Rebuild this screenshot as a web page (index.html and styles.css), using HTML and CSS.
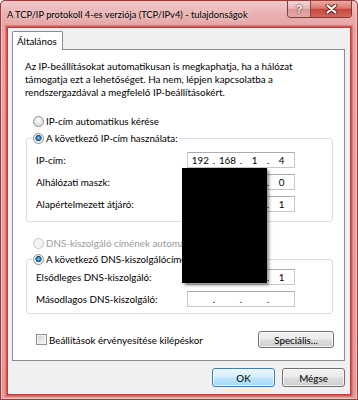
FILE: index.html
```html
<!DOCTYPE html>
<html lang="hu">
<head>
<meta charset="utf-8">
<title>TCP/IPv4 tulajdonságok</title>
<link rel="stylesheet" href="styles.css">
</head>
<body>
<div class="window">
  <div class="titlebar">
    <span class="title">A TCP/IP protokoll 4-es verziója (TCP/IPv4) - tulajdonságok</span>
    <div class="caption">
      <span class="cbtn help">?</span>
      <span class="cbtn close"><svg width="13" height="10" viewBox="0 0 13 10"><path d="M2.5 1.5 L10.5 8.5 M10.5 1.5 L2.5 8.5" stroke="#5a2020" stroke-width="4" stroke-linecap="round"/><path d="M2.5 1.5 L10.5 8.5 M10.5 1.5 L2.5 8.5" stroke="#ffffff" stroke-width="2.2" stroke-linecap="round"/></svg></span>
    </div>
  </div>
  <div class="client">
    <div class="tabs"><span class="tab">Általános</span></div>
    <div class="panel">
      <p class="intro">Az IP-beállításokat automatikusan is megkaphatja, ha a hálózat<br>támogatja ezt a lehetőséget. Ha nem, lépjen kapcsolatba a<br>rendszergazdával a megfelelő IP-beállításokért.</p>
      <div class="opt first"><span class="radio"></span><span>IP-cím automatikus kérése</span></div>
      <fieldset class="group">
        <legend><span class="opt inlegend"><span class="radio on"></span><span>A következő IP-cím használata:</span></span></legend>
        <div class="fields">
          <span>IP-cím:</span>
          <div class="ip"><span>192</span><i>.</i><span>168</span><i>.</i><span>1</span><i>.</i><span>4</span></div>
          <span>Alhálózati maszk:</span>
          <div class="ip"><span>255</span><i>.</i><span>255</span><i>.</i><span>255</span><i>.</i><span>0</span></div>
          <span>Alapértelmezett átjáró:</span>
          <div class="ip"><span>192</span><i>.</i><span>168</span><i>.</i><span>1</span><i>.</i><span>1</span></div>
        </div>
      </fieldset>
      <div class="opt dnsauto disabled"><span class="radio off"></span><span>DNS-kiszolgáló címének automatikus kérése</span></div>
      <fieldset class="group dns">
        <legend><span class="opt inlegend"><span class="radio on"></span><span>A következő DNS-kiszolgálócímek használata:</span></span></legend>
        <div class="fields dnsfields">
          <span>Elsődleges DNS-kiszolgáló:</span>
          <div class="ip"><span>192</span><i>.</i><span>168</span><i>.</i><span>1</span><i>.</i><span>1</span></div>
          <span>Másodlagos DNS-kiszolgáló:</span>
          <div class="ip"><span></span><i>.</i><span></span><i>.</i><span></span><i>.</i><span></span></div>
        </div>
      </fieldset>
      <div class="bottomrow">
        <span class="check"></span><span>Beállítások érvényesítése kilépéskor</span>
        <span class="btn special">Speciális...</span>
      </div>
    </div>
    <div class="buttons">
      <span class="btn default">OK</span>
      <span class="btn">Mégse</span>
    </div>
  </div>
  <div class="redact"></div>
</div>
</body>
</html>
```
FILE: styles.css
```css
* { box-sizing: border-box; }
html, body { margin: 0; padding: 0; }
body {
  width: 358px;
  height: 400px;
  overflow: hidden;
  background: #ffffff;
  font-family: "Lato", "Liberation Sans", sans-serif;
  font-size: 9.8px;
  color: #000;
}
.window {
  position: relative;
  width: 358px;
  height: 400px;
  display: flex;
  flex-direction: column;
  border-radius: 5px 5px 0 0;
  background: linear-gradient(180deg, #f2cdcd 0px, #e9b0b0 14px, #e6a5a5 27px, #e39c9c 100%);
  box-shadow: inset 0 0 0 1px #9c3c3c, inset 0 0 0 2px #f0c2c2;
}
.titlebar {
  height: 27px;
  display: flex;
  align-items: flex-start;
  padding-left: 7px;
}
.title {
  flex: 1;
  min-width: 0;
  overflow: hidden;
  margin-top: 8px;
  font-size: 9.3px;
  line-height: 14px;
  color: #000;
  white-space: nowrap;
  text-shadow: 0 0 6px rgba(255,255,255,0.9);
}
.caption {
  flex: none;
  margin-right: 6px;
  margin-top: 1px;
  display: flex;
  border: 1px solid #7c3d3d;
  border-top: none;
  border-radius: 0 0 4px 4px;
  overflow: hidden;
  height: 17px;
}
.cbtn {
  display: flex;
  align-items: center;
  justify-content: center;
  height: 16px;
}
.help {
  width: 23px;
  border-right: 1px solid #8a4848;
  background: linear-gradient(180deg, #f4d6d6 0%, #e9b6b6 48%, #dc9797 52%, #e4a8a8 100%);
  color: #fff;
  font-weight: bold;
  font-size: 11px;
  font-family: "Liberation Sans", sans-serif;
  text-shadow: 0 0 2px #5a2a2a, 0 0 1px #5a2a2a;
}
.close {
  width: 40px;
  background: linear-gradient(180deg, #eeaba3 0%, #da786d 45%, #c8473d 52%, #d3665c 100%);
}
.client {
  flex: 1;
  margin: 0 7px 5px 7px;
  background: #f0f0f0;
  border: 1px solid #b8403f;
  box-shadow: 0 0 0 1px #d65858, 0 0 0 2px #e07a7a;
  padding: 3px 5px 7px 4px;
  display: flex;
  flex-direction: column;
}
.tabs { display: flex; }
.tab {
  position: relative;
  z-index: 1;
  height: 19px;
  margin-bottom: -1px;
  padding: 3px 5px 0 4px;
  background: #fff;
  border: 1px solid #898c95;
  border-bottom: none;
  border-radius: 2px 2px 0 0;
  line-height: 13px;
}
.panel {
  flex: 1;
  background: #fff;
  border: 1px solid #898c95;
  padding: 10px 10px 0 12px;
  display: flex;
  flex-direction: column;
}
.intro {
  margin: 0;
  line-height: 13px;
  white-space: nowrap;
}
.opt {
  display: flex;
  align-items: center;
  height: 16px;
  gap: 2px;
  white-space: nowrap;
}
.opt.first { margin: 14px 0 0 8px; }
.opt.dnsauto { margin: 13px 0 0 8px; }
.disabled { color: #9a9a9a; }
.radio {
  flex: none;
  width: 11px;
  height: 11px;
  border-radius: 50%;
  border: 1px solid #8e8f8f;
  background: radial-gradient(circle at 50% 40%, #ffffff 0, #f0f0f0 2px, #d6d6d6 100%);
}
.radio.on {
  background: radial-gradient(circle at 50% 45%, #a9dcf3 0, #3a8dc0 1.4px, #164f7c 2.8px, #e9e9e9 3.4px, #f7f7f7 4px, #d8d8d8 100%);
}
.radio.off {
  border-color: #c6c6c6;
  background: #f4f4f4;
}
.group {
  width: 307px;
  min-width: 0;
  margin: 1px 0 0 1px;
  padding: 0 0 9px 0;
  border: 1px solid #d5dfe5;
  border-radius: 3px;
}
.group legend {
  margin-left: 5px;
  padding: 0 1px;
}
.fields {
  display: grid;
  grid-template-columns: 151px 108px;
  row-gap: 6px;
  align-items: center;
  padding-left: 9px;
  margin-top: 6px;
  white-space: nowrap;
}
.group.dns { margin-top: 0; padding-bottom: 6px; }
.fields.dnsfields { margin-top: 2px; }
.ip {
  height: 16px;
  border: 1px solid #c5c8ce;
  border-top-color: #abadb3;
  background: #fff;
  display: grid;
  grid-template-columns: 1fr auto 1fr auto 1fr auto 1fr;
  align-items: center;
  text-align: center;
  line-height: 13px;
}
.ip i { font-style: normal; }
.bottomrow {
  display: flex;
  align-items: center;
  margin: 17px 0 0 11px;
  white-space: nowrap;
}
.check {
  flex: none;
  width: 11px;
  height: 11px;
  margin-right: 2px;
  border: 1px solid #8e8f8f;
  background: linear-gradient(135deg, #d4d4d4, #f6f6f6);
  box-shadow: inset 0 0 0 1px #f4f4f4;
}
.btn {
  display: flex;
  align-items: center;
  justify-content: center;
  height: 19px;
  width: 63px;
  border: 1px solid #707070;
  border-radius: 3px;
  background: linear-gradient(180deg, #f2f2f2 0%, #ebebeb 45%, #dddddd 52%, #cfcfcf 100%);
  box-shadow: inset 0 0 0 1px rgba(255,255,255,0.75);
}
.btn.special {
  margin-left: auto;
  width: 76px;
  height: 17px;
}
.btn.default {
  border-color: #3c7fb1;
  background: linear-gradient(180deg, #eaf6fd 0%, #d9f0fc 45%, #bee6fd 52%, #a7d9f5 100%);
}
.buttons {
  display: flex;
  justify-content: flex-end;
  gap: 7px;
  padding-top: 7px;
}
.redact {
  position: absolute;
  left: 182px;
  top: 168px;
  width: 85px;
  height: 115px;
  background: #000;
  box-shadow: 2px 2px 3px rgba(0,0,0,0.45);
}
```
